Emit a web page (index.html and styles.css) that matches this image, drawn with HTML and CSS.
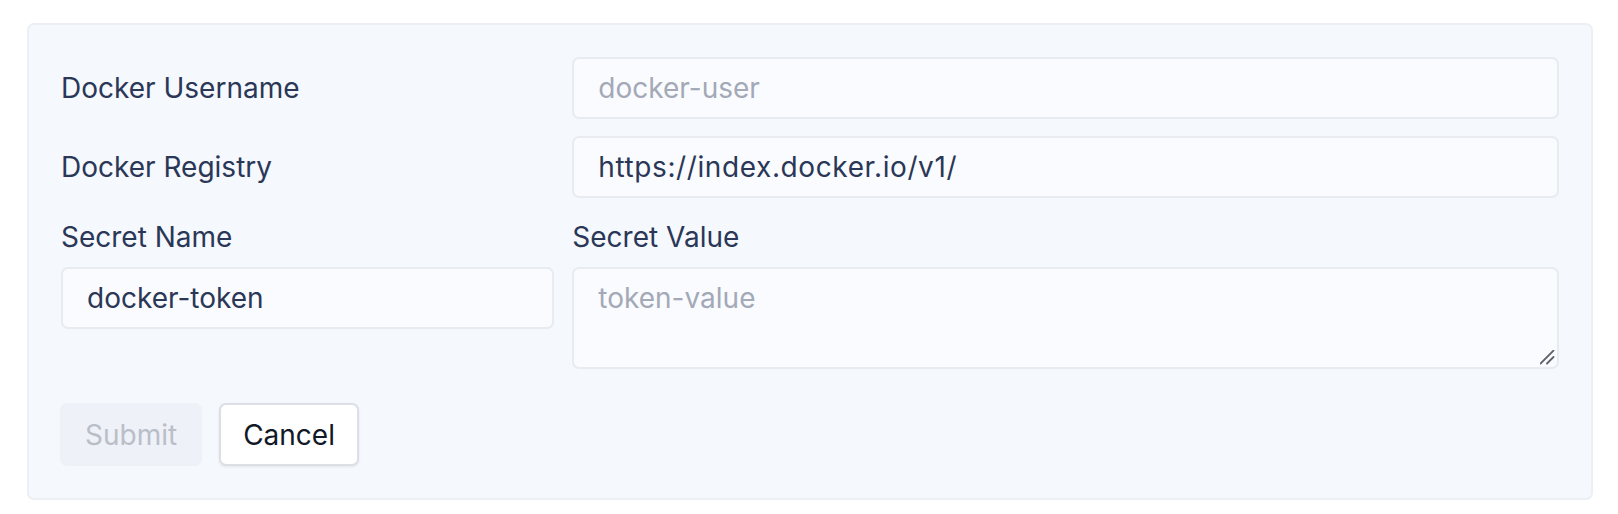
FILE: index.html
```html
<!DOCTYPE html>
<html lang="en">
<head>
<meta charset="utf-8">
<title>Docker Secret</title>
<link rel="stylesheet" href="styles.css">
</head>
<body>
<form class="card">
  <div class="row inline">
    <label class="label" for="user">Docker Username</label>
    <input class="field" id="user" type="text" placeholder="docker-user">
  </div>
  <div class="row inline">
    <label class="label" for="reg">Docker Registry</label>
    <input class="field url" id="reg" type="text" value="https://index.docker.io/v1/">
  </div>
  <div class="row stacked">
    <div class="col">
      <label class="label tall" for="sname">Secret Name</label>
      <input class="field" id="sname" type="text" value="docker-token">
    </div>
    <div class="col">
      <label class="label tall" for="sval">Secret Value</label>
      <div class="area-wrap">
        <textarea class="field area" id="sval" placeholder="token-value"></textarea>
        <svg class="grip" width="16" height="16" viewBox="0 0 16 16" aria-hidden="true">
          <path d="M0.5 13.5 L13.5 0.5 M7 13.5 L13.5 7" stroke="#5f6268" stroke-width="1.8" stroke-linecap="round" fill="none"/>
        </svg>
      </div>
    </div>
  </div>
  <div class="actions">
    <button class="btn submit" type="button" disabled>Submit</button>
    <button class="btn cancel" type="button">Cancel</button>
  </div>
</form>
</body>
</html>
```

FILE: styles.css
```css
* { box-sizing: border-box; }
html, body { background: #ffffff; }
body {
  margin: 23px 25px 0 27px;
  font-family: Inter, "Noto Sans", sans-serif;
  font-size: 28px;
  color: #2a3757;
}
.card {
  display: flex;
  flex-direction: column;
  background: #f5f8fd;
  border: 2px solid #eceff4;
  border-radius: 7px;
  padding: 32px;
}
.row {
  display: grid;
  grid-template-columns: 1fr 2fr;
  column-gap: 18px;
  align-items: center;
}
.row + .row { margin-top: 17px; }
.stacked { align-items: start; }
.col { display: flex; flex-direction: column; gap: 8px; }
.label {
  font-size: 28px;
  line-height: 40px;
  color: #2a3757;
}
.label.tall { line-height: 44px; }
.field {
  display: block;
  width: 100%;
  height: 62px;
  margin: 0;
  padding: 0 24px;
  font-family: Inter, "Noto Sans", sans-serif;
  font-size: 28px;
  color: #2a3757;
  background: #fafbfe;
  border: 2px solid #e8ebf0;
  border-radius: 7px;
  outline: none;
}
.field.url { letter-spacing: 0.6px; }
.field::placeholder { color: #a3a9b6; opacity: 1; }
.area-wrap { position: relative; }
.area {
  height: 102px;
  padding: 12px 24px;
  line-height: normal;
  resize: none;
}
.grip {
  position: absolute;
  right: 3px;
  bottom: 3px;
  pointer-events: none;
}
.actions {
  display: flex;
  gap: 17px;
  margin-top: 34px;
  margin-left: -1px;
}
.btn {
  display: flex;
  align-items: center;
  justify-content: center;
  height: 63px;
  margin: 0;
  padding: 0 23px;
  font-family: Inter, "Noto Sans", sans-serif;
  font-size: 28px;
  border-radius: 7px;
  cursor: pointer;
}
.submit {
  background: #eef1f7;
  color: #b9bec9;
  border: 2px solid #eef1f7;
  cursor: default;
}
.cancel {
  background: #ffffff;
  color: #111827;
  border: 2px solid #dcdfe5;
  box-shadow: 0 1px 3px rgba(17, 24, 39, 0.08);
  padding: 0 22px;
}
```
